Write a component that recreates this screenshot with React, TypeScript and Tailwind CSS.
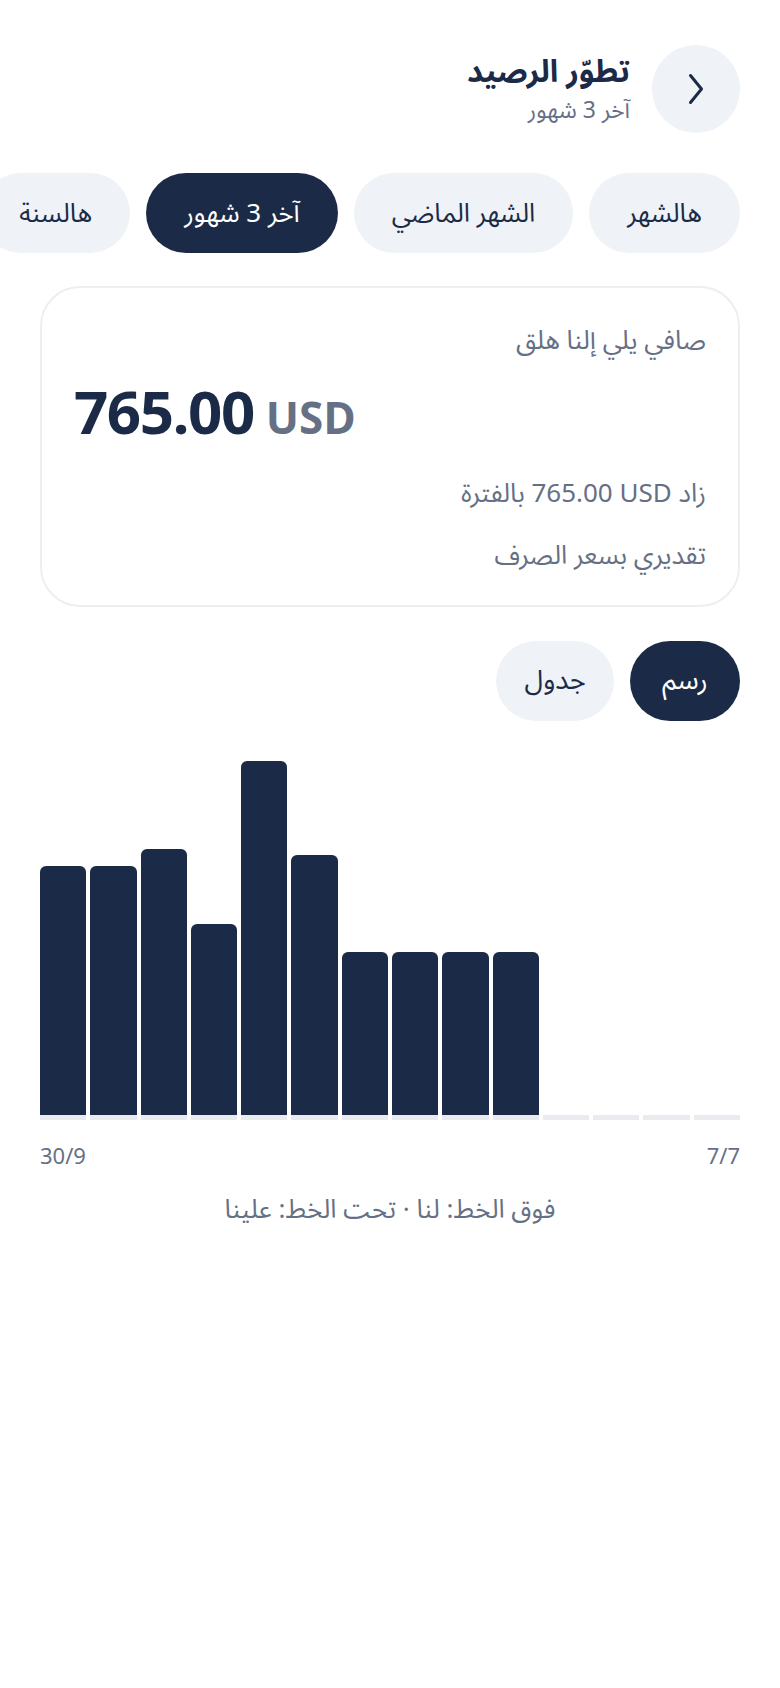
const periods = [
  { label: 'هالشهر', active: false },
  { label: 'الشهر الماضي', active: false },
  { label: 'آخر 3 شهور', active: true },
  { label: 'هالسنة', active: false },
]

// right to left: oldest slots have no data yet
const bars = [0, 0, 0, 0, 163, 163, 163, 163, 260, 354, 191, 266, 249, 249]

export default function App() {
  return (
    <div
      dir="rtl"
      className="min-h-screen w-full bg-white text-[#1b2b47] overflow-hidden"
      style={{ fontFamily: '"Noto Sans Arabic", "Noto Sans", "DejaVu Sans", sans-serif' }}
    >
      {/* Header */}
      <div className="flex items-center gap-[22px] px-10 pt-[45px]">
        <button className="flex h-[88px] w-[88px] shrink-0 items-center justify-center rounded-full bg-[#eff2f6]">
          <svg width="18" height="32" viewBox="0 0 18 32" fill="none">
            <path d="M3.5 2.5 L14.5 16 L3.5 29.5" stroke="#1b2b47" strokeWidth="3" strokeLinecap="round" strokeLinejoin="round" />
          </svg>
        </button>
        <div className="flex flex-col">
          <h1 className="text-[31px] font-bold leading-[40px]">تطوّر الرصيد</h1>
          <p className="mt-1 text-[23px] leading-[30px] text-[#667085]">آخر 3 شهور</p>
        </div>
      </div>

      {/* Period chips */}
      <div className="mt-10 flex gap-4 overflow-hidden pr-10">
        {periods.map((p) => (
          <div
            key={p.label}
            className={
              p.active
                ? 'flex h-20 shrink-0 items-center rounded-full bg-[#1b2b47] px-[38px] text-[26px] text-white'
                : 'flex h-20 shrink-0 items-center rounded-full bg-[#eff2f6] px-[38px] text-[26px] text-[#1b2b47]'
            }
          >
            {p.label}
          </div>
        ))}
      </div>

      {/* Summary card */}
      <div className="mx-10 mt-[33px] h-[321px] rounded-[40px] border-2 border-[#eceef1] px-8 pt-[35px]">
        <p className="text-[26px] leading-[36px] text-[#667085]">صافي يلي إلنا هلق</p>
        <div dir="ltr" className="mt-6 flex items-baseline justify-start gap-3">
          <span className="text-[60px] font-bold leading-[64px] tracking-tight">765.00</span>
          <span className="text-[44px] font-bold leading-[64px] text-[#667085]">USD</span>
        </div>
        <p className="mt-[23px] text-[26px] leading-[38px] text-[#667085]">
          زاد <span dir="ltr">765.00 USD</span> بالفترة
        </p>
        <p className="mt-[25px] text-[26px] leading-[36px] text-[#667085]">تقديري بسعر الصرف</p>
      </div>

      {/* View toggle */}
      <div className="mt-[34px] flex gap-4 px-10">
        <div className="flex h-20 w-[110px] items-center justify-center rounded-full bg-[#1b2b47] text-[27px] text-white">
          رسم
        </div>
        <div className="flex h-20 w-[118px] items-center justify-center rounded-full bg-[#eff2f6] text-[27px] text-[#1b2b47]">
          جدول
        </div>
      </div>

      {/* Bar chart */}
      <div className="mt-[39px] flex gap-1 px-10">
        {bars.map((h, i) => (
          <div key={i} className="flex h-[360px] flex-1 flex-col justify-end">
            {h > 0 && <div className="rounded-t-[6px] bg-[#1b2b47]" style={{ height: h }} />}
            <div className="h-[5px] bg-[#e9ebef]" />
          </div>
        ))}
      </div>

      <div className="mt-[22px] flex justify-between px-10 text-[22px] leading-[30px] text-[#667085]">
        <span>7/7</span>
        <span>30/9</span>
      </div>

      <p className="mt-5 text-center text-[26px] leading-[36px] text-[#667085]">
        فوق الخط: لنا · تحت الخط: علينا
      </p>
    </div>
  )
}
